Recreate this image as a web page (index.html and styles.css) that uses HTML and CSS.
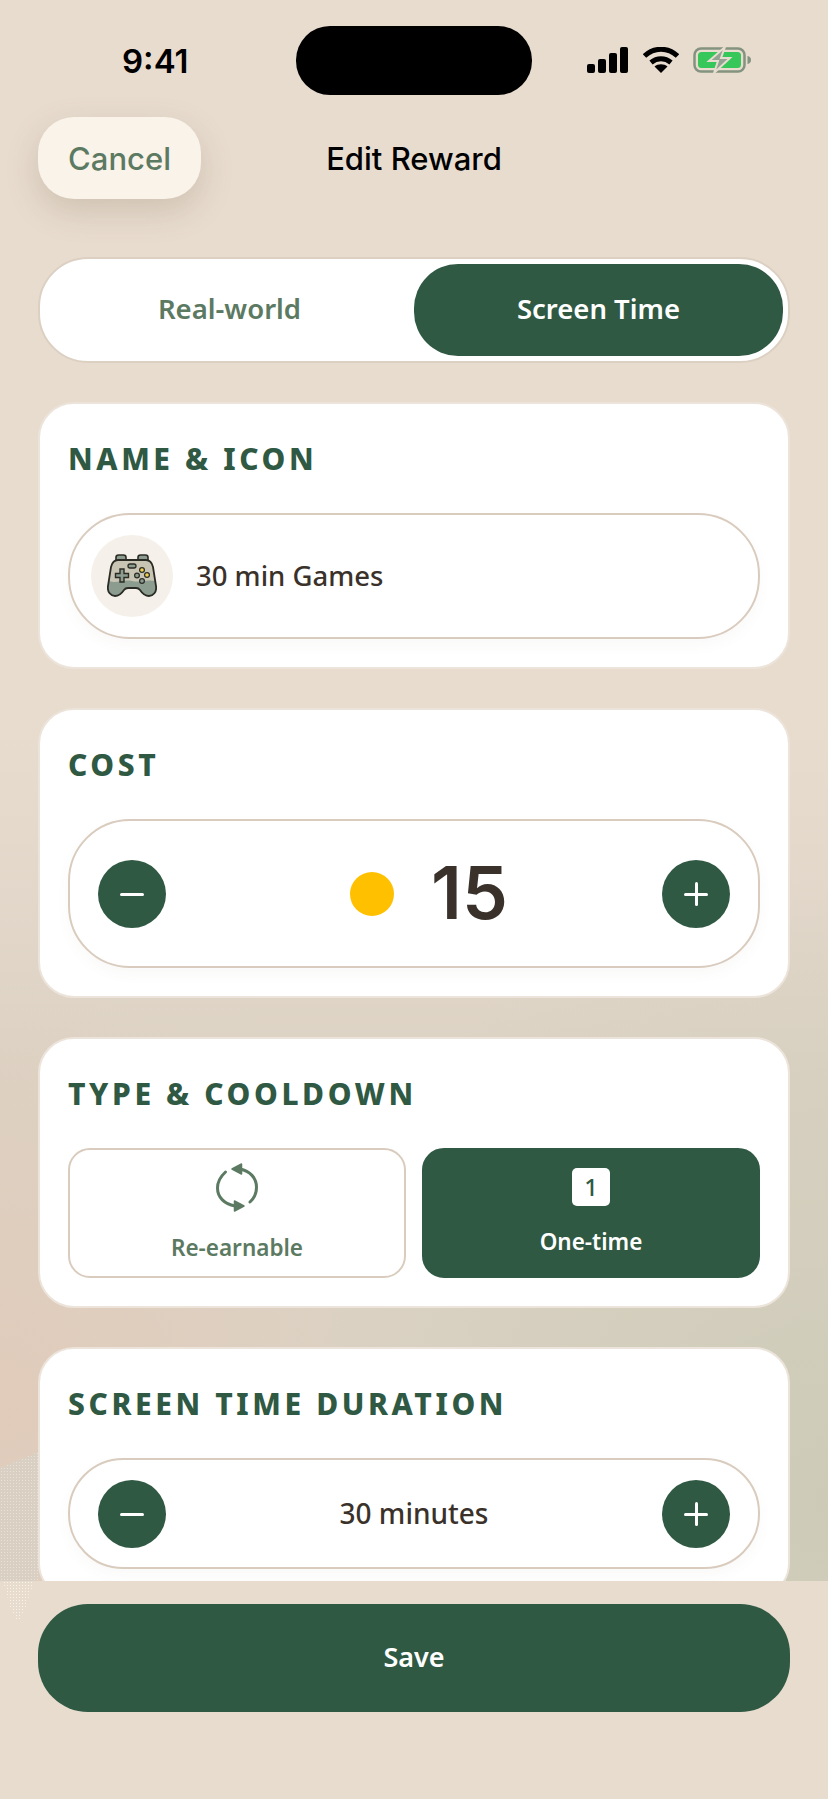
FILE: index.html
```html
<!DOCTYPE html>
<html lang="en">
<head>
  <meta charset="UTF-8">
  <meta name="viewport" content="width=device-width, initial-scale=1.0">
  <title>Edit Reward</title>
  <link rel="stylesheet" href="styles.css">
</head>
<body>
  <div class="screen">
    <div class="speckle"></div>
    <div class="speckle-tail"></div>
    <div class="content">
      <div class="status-bar">
        <span class="clock">9:41</span>
        <div class="island"></div>
        <div class="status-icons">
          <svg width="42" height="26" viewBox="0 0 42 26">
            <rect x="0" y="17" width="8" height="9" rx="2"/>
            <rect x="11" y="12" width="8" height="14" rx="2"/>
            <rect x="22" y="6" width="8" height="20" rx="2"/>
            <rect x="33" y="0" width="8" height="26" rx="2"/>
          </svg>
          <svg width="36" height="26" viewBox="0 0 36 26">
            <path d="M1.500 9C11 0 25 0 34.500 9" fill="none" stroke="#000" stroke-width="5"/>
            <path d="M8 15.500C14 10.500 22 10.500 28 15.500" fill="none" stroke="#000" stroke-width="5"/>
            <path d="M18 26L11.500 19.500C15 16.500 21 16.500 24.500 19.500Z"/>
          </svg>
          <svg width="59" height="26" viewBox="0 0 59 26">
            <rect x="1.500" y="1.500" width="50" height="23" rx="6.500" fill="none" stroke="#83937f" stroke-width="2.500"/>
            <rect x="5" y="5" width="43" height="16" rx="3.500" fill="#35c75a"/>
            <path d="M54.500 9c2.500.5 3.500 2 3.500 4s-1 3.500-3.500 4z" fill="#83937f"/>
            <path d="M32 0L16 14h9l-4 12 16-15h-9z" fill="#94a294" stroke="#e8dccf" stroke-width="2"/>
          </svg>
        </div>
      </div>

      <div class="nav-bar">
        <button class="cancel-btn">Cancel</button>
        <h1>Edit Reward</h1>
      </div>

      <div class="segment">
        <div class="segment-item">Real-world</div>
        <div class="segment-item active">Screen Time</div>
      </div>

      <section class="card">
        <h2>NAME &amp; ICON</h2>
        <div class="name-field">
          <div class="icon-circle">
            <svg width="50" height="44" viewBox="0 0 50 44">
              <rect x="9" y="1" width="10" height="7" rx="2.500" fill="#8c9d90" stroke="#2b2b26" stroke-width="1.600"/>
              <rect x="31" y="1" width="10" height="7" rx="2.500" fill="#8c9d90" stroke="#2b2b26" stroke-width="1.600"/>
              <path d="M11 6H39C43 6 45 9 46 13L49 32C50 38 46 42 42 42C38 42 35 39 33 36C32 34.500 31 34 29 34H21C19 34 18 34.500 17 36C15 39 12 42 8 42C4 42 0 38 1 32L4 13C5 9 7 6 11 6Z" fill="#c8c5b4"/>
              <path d="M1.800 27C10 30 16 25 25 27C33 29 40 25 48.200 27L49 32C50 38 46 42 42 42C38 42 35 39 33 36C32 34.500 31 34 29 34H21C19 34 18 34.500 17 36C15 39 12 42 8 42C4 42 0 38 1 32Z" fill="#8c9d90"/>
              <path d="M11 6H39C43 6 45 9 46 13L49 32C50 38 46 42 42 42C38 42 35 39 33 36C32 34.500 31 34 29 34H21C19 34 18 34.500 17 36C15 39 12 42 8 42C4 42 0 38 1 32L4 13C5 9 7 6 11 6Z" fill="none" stroke="#2b2b26" stroke-width="1.800"/>
              <rect x="21" y="10" width="8" height="4" rx="2" fill="#8c9d90" stroke="#2b2b26" stroke-width="1.300"/>
              <path d="M13 15h4v4.500h4.500v4H17V28h-4v-4.500H8.500v-4H13z" fill="#8c9d90" stroke="#2b2b26" stroke-width="1.400"/>
              <circle cx="35" cy="16" r="2.400" fill="#f0d050" stroke="#2b2b26" stroke-width="1.200"/>
              <circle cx="40" cy="21" r="2.400" fill="#f0d050" stroke="#2b2b26" stroke-width="1.200"/>
              <circle cx="30" cy="21.500" r="2.400" fill="#8c9d90" stroke="#2b2b26" stroke-width="1.200"/>
              <circle cx="35" cy="27" r="2.400" fill="#8c9d90" stroke="#2b2b26" stroke-width="1.200"/>
            </svg>
          </div>
          <span class="name-text">30 min Games</span>
        </div>
      </section>

      <section class="card">
        <h2>COST</h2>
        <div class="stepper stepper-large">
          <button class="round-btn"><span class="minus"></span></button>
          <div class="cost-value">
            <span class="coin"></span>
            <span class="cost-number">15</span>
          </div>
          <button class="round-btn"><span class="plus"></span></button>
        </div>
      </section>

      <section class="card">
        <h2>TYPE &amp; COOLDOWN</h2>
        <div class="type-options">
          <div class="type-option">
            <svg class="repeat-icon" width="42" height="49" viewBox="0 0 42 49" fill="none" stroke="#5c7a62" stroke-width="3" stroke-linecap="round">
              <path d="M24 6C34 8 40.500 15 40.500 24C40.500 29 38.500 35 34 39"/>
              <path d="M9.500 9C4 14 1.500 20 1.500 25C1.500 34 8 41 19 43"/>
              <path d="M16 6L25.500 1V11Z" fill="#5c7a62" stroke="#5c7a62" stroke-width="1.500" stroke-linejoin="round"/>
              <path d="M28 43L18.500 38V48Z" fill="#5c7a62" stroke="#5c7a62" stroke-width="1.500" stroke-linejoin="round"/>
            </svg>
            <span>Re-earnable</span>
          </div>
          <div class="type-option active">
            <div class="one-badge">1</div>
            <span>One-time</span>
          </div>
        </div>
      </section>

      <section class="card">
        <h2>SCREEN TIME DURATION</h2>
        <div class="stepper stepper-small">
          <button class="round-btn"><span class="minus"></span></button>
          <div class="duration-text">30 minutes</div>
          <button class="round-btn"><span class="plus"></span></button>
        </div>
      </section>
    </div>

    <div class="footer">
      <button class="save-btn">Save</button>
    </div>
  </div>
</body>
</html>
```

FILE: styles.css
```css
/* Basic Reset */
* {
  margin: 0;
  padding: 0;
  box-sizing: border-box;
  font-family: "Noto Sans", sans-serif;
}

body {
  height: 100vh;
  overflow: hidden;
  background-color: #e8dccf;
}

button {
  border: none;
  cursor: pointer;
}

/* Page */
.screen {
  position: relative;
  height: 100vh;
  display: flex;
  flex-direction: column;
  background:
    radial-gradient(ellipse 380px 420px at 0 1400px, rgba(225, 203, 186, 0.95), rgba(225, 203, 186, 0) 100%),
    radial-gradient(ellipse 560px 620px at 828px 1500px, rgba(205, 203, 184, 1), rgba(205, 203, 184, 0) 100%),
    linear-gradient(#e8dccf 40%, #dcd2c4 60%, #dcd2c4);
}

.content {
  flex: 1;
  overflow: hidden;
  padding: 0 38px;
}

/* grainy patch on the lower left edge */
.speckle,
.speckle-tail {
  position: absolute;
  left: 0;
  width: 38px;
  background-size: 3px 3px;
}

.speckle {
  top: 1452px;
  height: 129px;
  background-color: #d9d0c3;
  background-image: radial-gradient(rgba(240, 234, 224, 0.7) 0.7px, transparent 0.9px);
  clip-path: polygon(0 16px, 100% 0, 100% 100%, 0 100%);
}

.speckle-tail {
  z-index: 1;
  top: 1581px;
  height: 42px;
  background-image: radial-gradient(rgba(250, 246, 238, 0.9) 0.7px, transparent 0.9px);
  clip-path: polygon(3px 0, 34px 0, 26px 60%, 18px 100%, 10px 60%);
}

/* Status bar */
.status-bar {
  display: grid;
  grid-template-columns: 1fr 236px 1fr;
  align-items: center;
  height: 69px;
  margin: 26px -38px 0;
}

.clock {
  justify-self: start;
  margin-left: 122px;
  font-family: Inter, sans-serif;
  font-size: 33px;
  font-weight: 600;
  color: #000;
}

.island {
  height: 69px;
  background-color: #000;
  border-radius: 34px;
}

.status-icons {
  display: flex;
  align-items: center;
  gap: 14px;
  margin-left: 55px;
  margin-top: -1px;
}

/* Nav bar */
.nav-bar {
  display: grid;
  grid-template-columns: 1fr auto 1fr;
  align-items: center;
  margin-top: 22px;
}

.cancel-btn {
  justify-self: start;
  width: 163px;
  height: 82px;
  border-radius: 36px;
  background-color: #faf3ea;
  box-shadow: 0 12px 32px rgba(120, 100, 75, 0.22);
  font-family: Inter, sans-serif;
  font-size: 31px;
  font-weight: 500;
  color: #5c7a62;
}

.nav-bar h1 {
  grid-column: 2;
  font-family: Inter, sans-serif;
  font-size: 31px;
  font-weight: 500;
  color: #000;
}

/* Real-world / Screen Time switch */
.segment {
  display: grid;
  grid-template-columns: 1fr 1fr;
  height: 106px;
  margin-top: 58px;
  padding: 5px;
  background-color: #fff;
  border: 2px solid #dcd0c2;
  border-radius: 50px;
}

.segment-item {
  display: flex;
  align-items: center;
  justify-content: center;
  padding-bottom: 4px;
  border-radius: 44px;
  font-size: 27.500px;
  font-weight: 600;
  color: #5c7a62;
}

.segment-item.active {
  background-color: #2f5943;
  color: #fff;
}

/* Cards */
.card {
  margin-top: 39px;
  padding: 38px 28px 28px;
  background-color: #fff;
  border: 2px solid #ece4da;
  border-radius: 36px;
}

.card h2 {
  height: 34px;
  margin-bottom: 37px;
  font-size: 30px;
  line-height: 34px;
  font-weight: 800;
  letter-spacing: 3.600px;
  color: #2f5943;
}

.name-field {
  display: flex;
  align-items: center;
  gap: 23px;
  height: 126px;
  padding-left: 21px;
  border: 2px solid #d9ccbe;
  border-radius: 62px;
  box-shadow: 0 6px 14px rgba(120, 100, 75, 0.04);
}

.icon-circle {
  display: flex;
  align-items: center;
  justify-content: center;
  width: 82px;
  height: 82px;
  border-radius: 50%;
  background-color: #f5f1ea;
}

.name-text {
  padding-bottom: 2px;
  font-size: 27.500px;
  font-weight: 500;
  color: #3a322a;
}

/* Steppers */
.stepper {
  display: flex;
  align-items: center;
  justify-content: space-between;
  padding: 0 28px;
  border: 2px solid #d9ccbe;
  box-shadow: 0 6px 14px rgba(120, 100, 75, 0.04);
}

.stepper-large {
  height: 149px;
  border-radius: 62px;
}

.stepper-small {
  height: 111px;
  border-radius: 55px;
}

.round-btn {
  position: relative;
  width: 68px;
  height: 68px;
  border-radius: 50%;
  background-color: #2f5943;
}

.minus,
.plus {
  position: absolute;
  left: 22px;
  top: 33px;
  width: 24px;
  height: 3px;
  border-radius: 2px;
  background-color: #fff;
}

.plus::after {
  content: "";
  position: absolute;
  left: 10.500px;
  top: -10.500px;
  width: 3px;
  height: 24px;
  border-radius: 2px;
  background-color: #fff;
}

.cost-value {
  display: flex;
  align-items: center;
  gap: 37px;
  margin-left: 30px;
}

.coin {
  width: 44px;
  height: 44px;
  border-radius: 50%;
  background-color: #ffc000;
}

.cost-number {
  padding-bottom: 2px;
  font-family: Inter, sans-serif;
  font-size: 73px;
  line-height: 66px;
  font-weight: 600;
  color: #3a322a;
}

.duration-text {
  padding-bottom: 2px;
  font-size: 28px;
  font-weight: 500;
  color: #3a322a;
}

/* Type options */
.type-options {
  display: grid;
  grid-template-columns: 1fr 1fr;
  gap: 16px;
}

.type-option {
  display: flex;
  flex-direction: column;
  align-items: center;
  height: 130px;
  padding-top: 13px;
  border: 2px solid #d9ccbe;
  border-radius: 22px;
  font-size: 22.500px;
  line-height: 30px;
  font-weight: 600;
  color: #5c7a62;
}

.repeat-icon {
  margin-bottom: 21px;
}

.type-option.active {
  padding-top: 18px;
  background-color: #2f5943;
  border-color: #2f5943;
  color: #fff;
}

.one-badge {
  width: 38px;
  height: 38px;
  margin-bottom: 21px;
  border-radius: 5px;
  background-color: #fff;
  text-align: center;
  line-height: 38px;
  font-size: 24px;
  font-weight: 500;
  color: #2f5943;
}

/* Footer */
.footer {
  position: relative;
  height: 218px;
  padding: 23px 38px 0;
  background-color: #e8dccf;
}

.save-btn {
  width: 100%;
  height: 108px;
  padding-bottom: 4px;
  border-radius: 50px;
  background-color: #2f5943;
  font-size: 27px;
  font-weight: 600;
  color: #fff;
}
```
